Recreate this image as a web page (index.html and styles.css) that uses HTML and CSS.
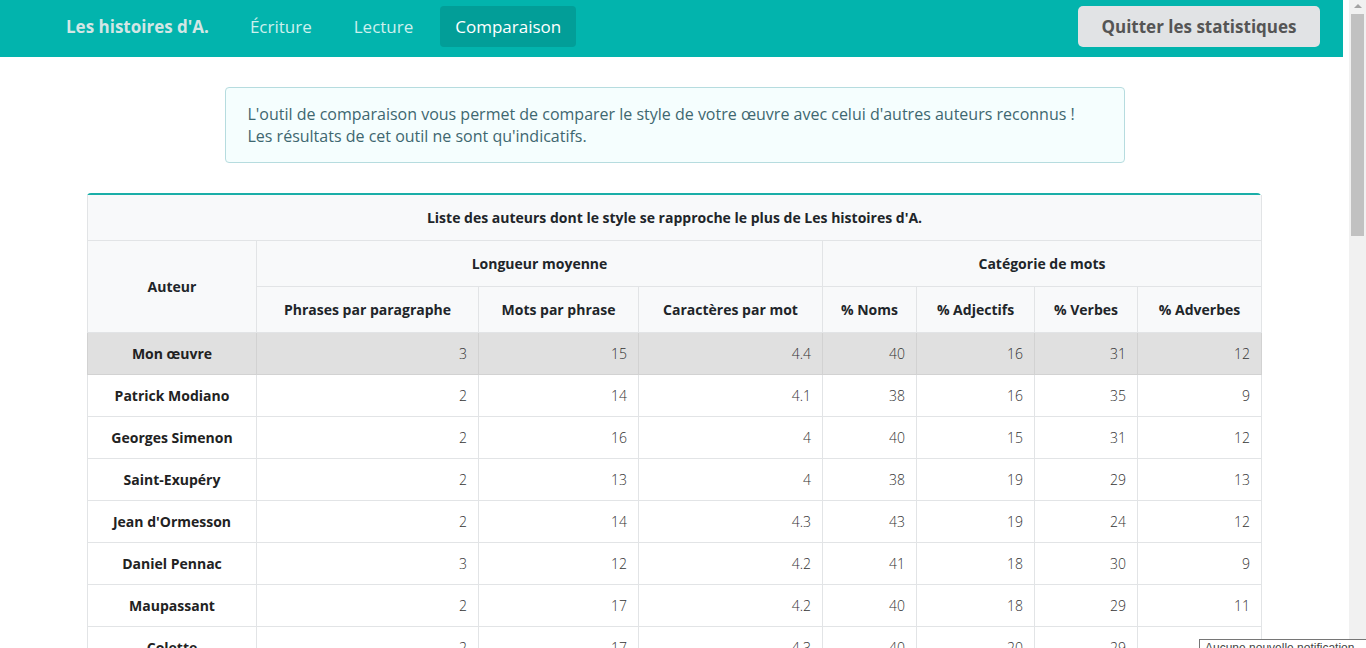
FILE: index.html
```html
<!DOCTYPE html>
<html lang="fr">
<head>
  <meta charset="UTF-8">
  <title>Les histoires d'A. - Comparaison</title>
  <link rel="stylesheet" href="styles.css">
</head>
<body>
  <div class="page">
    <nav class="navbar">
      <div class="nav-left">
        <span class="brand">Les histoires d'A.</span>
        <a class="nav-link" href="#">Écriture</a>
        <a class="nav-link" href="#">Lecture</a>
        <a class="nav-link active" href="#">Comparaison</a>
      </div>
      <button class="quit-btn">Quitter les statistiques</button>
    </nav>

    <main class="content">
      <div class="info-box">
        L'outil de comparaison vous permet de comparer le style de votre œuvre avec celui d'autres auteurs reconnus !<br>
        Les résultats de cet outil ne sont qu'indicatifs.
      </div>

      <div class="table-wrap">
        <table class="stats">
          <colgroup>
            <col style="width: 169px">
            <col style="width: 222px">
            <col style="width: 160px">
            <col style="width: 184px">
            <col style="width: 94px">
            <col style="width: 118px">
            <col style="width: 103px">
            <col style="width: 124px">
          </colgroup>
          <thead>
            <tr>
              <th colspan="8" class="caption">Liste des auteurs dont le style se rapproche le plus de Les histoires d'A.</th>
            </tr>
            <tr>
              <th rowspan="2">Auteur</th>
              <th colspan="3">Longueur moyenne</th>
              <th colspan="4">Catégorie de mots</th>
            </tr>
            <tr>
              <th>Phrases par paragraphe</th>
              <th>Mots par phrase</th>
              <th>Caractères par mot</th>
              <th>% Noms</th>
              <th>% Adjectifs</th>
              <th>% Verbes</th>
              <th>% Adverbes</th>
            </tr>
          </thead>
          <tbody>
            <tr class="mine"><th>Mon œuvre</th><td>3</td><td>15</td><td>4.4</td><td>40</td><td>16</td><td>31</td><td>12</td></tr>
            <tr><th>Patrick Modiano</th><td>2</td><td>14</td><td>4.1</td><td>38</td><td>16</td><td>35</td><td>9</td></tr>
            <tr><th>Georges Simenon</th><td>2</td><td>16</td><td>4</td><td>40</td><td>15</td><td>31</td><td>12</td></tr>
            <tr><th>Saint-Exupéry</th><td>2</td><td>13</td><td>4</td><td>38</td><td>19</td><td>29</td><td>13</td></tr>
            <tr><th>Jean d'Ormesson</th><td>2</td><td>14</td><td>4.3</td><td>43</td><td>19</td><td>24</td><td>12</td></tr>
            <tr><th>Daniel Pennac</th><td>3</td><td>12</td><td>4.2</td><td>41</td><td>18</td><td>30</td><td>9</td></tr>
            <tr><th>Maupassant</th><td>2</td><td>17</td><td>4.2</td><td>40</td><td>18</td><td>29</td><td>11</td></tr>
            <tr><th>Colette</th><td>2</td><td>17</td><td>4.3</td><td>40</td><td>20</td><td>29</td><td>11</td></tr>
          </tbody>
        </table>
      </div>
    </main>
  </div>

  <div class="scrollbar">
    <div class="scroll-arrow"></div>
    <div class="scroll-thumb"></div>
  </div>

  <div class="tooltip">Aucune nouvelle notification</div>
</body>
</html>
```

FILE: styles.css
```css
body {
  margin: 0;
  background: #fff;
  color: #212529;
  font-family: "Open Sans", sans-serif;
  font-size: 14px;
  overflow: hidden;
}

.page {
  width: 1349px;
}

.navbar {
  display: flex;
  justify-content: space-between;
  align-items: flex-start;
  height: 57px;
  margin-right: 6px;
  padding: 6px 23px 0 66px;
  background: #02b4ad;
  box-sizing: border-box;
}

.nav-left {
  display: flex;
  align-items: center;
}

.brand {
  color: #d3e6e5;
  font-size: 17px;
  font-weight: 700;
  margin-right: 26px;
}

.nav-link {
  color: #cdf0ee;
  text-decoration: none;
  font-size: 17px;
  padding: 9px 15px;
  line-height: 23px;
  border-radius: 4px;
  margin-right: 12px;
}

.nav-link.active {
  background: #029e98;
  color: #fff;
}

.quit-btn {
  background: #e1e3e5;
  color: #555;
  border: none;
  border-radius: 5px;
  font-family: inherit;
  font-size: 17px;
  font-weight: 700;
  height: 41px;
  width: 242px;
  cursor: pointer;
}

.content {
  padding: 30px 0 60px;
}

.info-box {
  width: 900px;
  margin: 0 auto;
  box-sizing: border-box;
  padding: 15px 22px;
  background: #f5fefe;
  border: 1px solid #b6dcdf;
  border-radius: 4px;
  color: #3e6770;
  font-size: 16px;
  font-weight: 400;
  line-height: 22px;
}

.table-wrap {
  width: 1174px;
  margin: 30px 0 0 87px;
  border-top: 2px solid #1aaea8;
  border-radius: 4px 4px 0 0;
}

.stats {
  width: 1174px;
  border-collapse: collapse;
  table-layout: fixed;
}

.stats th,
.stats td {
  border: 1px solid #e2e4e6;
  height: 41px;
  padding: 0 11px;
}

.stats thead th {
  background: #f8f9fa;
  font-weight: 700;
  color: #212529;
  height: 45px;
  text-align: center;
  white-space: nowrap;
}

.stats thead .caption {
  height: 45px;
  border-top: none;
}

.stats tbody th {
  font-weight: 700;
  text-align: center;
  color: #222;
}

.stats tbody td {
  text-align: right;
  font-weight: 300;
  color: #333;
}

.stats tbody tr.mine th,
.stats tbody tr.mine td {
  background: #e0e0e0;
  border-color: #d2d2d2;
}

.scrollbar {
  position: fixed;
  top: 0;
  right: 0;
  bottom: 0;
  width: 17px;
  background: #f1f1f1;
}

.scroll-arrow {
  width: 0;
  height: 0;
  margin: 4px auto 0;
  border-left: 4px solid transparent;
  border-right: 4px solid transparent;
  border-bottom: 4px solid #a3a3a3;
}

.scroll-thumb {
  position: absolute;
  top: 14px;
  left: 2px;
  width: 13px;
  height: 222px;
  background: #c1c1c1;
}

.tooltip {
  position: fixed;
  left: 1199px;
  right: 0;
  top: 639px;
  height: 16px;
  overflow: hidden;
  white-space: nowrap;
  background: #fff;
  border: 1px solid #767676;
  border-right: none;
  font-family: "Liberation Sans", sans-serif;
  font-size: 12px;
  color: #444;
  padding: 1px 5px;
}
```
